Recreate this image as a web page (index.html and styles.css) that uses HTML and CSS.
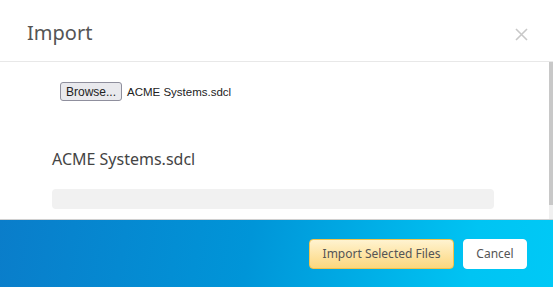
FILE: index.html
```html
<!DOCTYPE html>
<html lang="en">
  <head>
    <meta charset="UTF-8" />
    <meta name="viewport" content="width=device-width, initial-scale=1.0" />
    <title>Import</title>
    <link rel="stylesheet" href="styles.css">
  </head>
  <body>
    <div class="modal">
      <div class="header">
        <div class="title">Import</div>
        <div class="close">
          <svg width="13" height="13" viewBox="0 0 13 13">
            <path d="M1 1 L12 12 M12 1 L1 12" stroke="#c8c8c8" stroke-width="1.6" fill="none" />
          </svg>
        </div>
      </div>

      <div class="content">
        <div class="inner">
          <div class="file-row">
            <button class="browse">Browse...</button>
            <span class="file-name">ACME Systems.sdcl</span>
          </div>
          <div class="selected">ACME Systems.sdcl</div>
          <div class="progress"></div>
        </div>
        <div class="scrollbar">
          <div class="thumb"></div>
        </div>
      </div>

      <div class="footer">
        <button class="btn btn-import">Import Selected Files</button>
        <button class="btn btn-cancel">Cancel</button>
      </div>
    </div>
  </body>
</html>
```

FILE: styles.css
```css
body {
  margin: 0;
  padding: 0;
  background: #fff;
  font-family: "Noto Sans", "Open Sans", sans-serif;
}

.modal {
  width: 553px;
  height: 287px;
  display: flex;
  flex-direction: column;
}

.header {
  flex: none;
  height: 62px;
  border-bottom: 1px solid #e8e8e8;
  display: flex;
  justify-content: space-between;
  align-items: center;
  padding: 0 25px 0 27px;
  box-sizing: border-box;
}
.title {
  font-size: 20px;
  color: #555;
  margin-top: 4px;
}
.close {
  width: 13px;
  height: 13px;
  margin-top: 7px;
}
.close > svg {
  display: block;
}

.content {
  flex: none;
  height: 158px;
  box-sizing: border-box;
  border-bottom: 1px solid #d0d0d0;
  display: flex;
  overflow: hidden;
}
.inner {
  flex: 1;
  padding: 20px 0 0 52px;
}
.scrollbar {
  width: 4px;
  background: #f0f0f0;
}
.scrollbar > .thumb {
  height: 143px;
  background: #c8c8c8;
}

.file-row {
  display: flex;
  align-items: center;
  margin-left: 8px;
  height: 19px;
}
.browse {
  box-sizing: border-box;
  height: 19px;
  padding: 0 5px;
  border: 1px solid #8f8f9d;
  border-radius: 3px;
  background: #e9e9ed;
  font-family: "Liberation Sans", sans-serif;
  font-size: 12px;
  color: #222;
}
.file-name {
  margin-left: 5px;
  font-family: "Liberation Sans", sans-serif;
  font-size: 11.5px;
  color: #222;
}

.selected {
  margin-top: 47px;
  font-size: 16px;
  color: #444;
}
.progress {
  margin-top: 19px;
  width: 442px;
  height: 20px;
  border-radius: 4px;
  background: #f1f1f1;
}

.footer {
  flex: 1;
  background: linear-gradient(100deg, #0a7dca 0%, #0095d8 45%, #00c4f3 85%, #00c9f6 100%);
  display: flex;
  justify-content: flex-end;
  align-items: center;
  gap: 9px;
  padding: 0 26px 0 0;
}
.btn {
  box-sizing: border-box;
  height: 30px;
  border-radius: 4px;
  font-family: "Noto Sans", "Open Sans", sans-serif;
  font-size: 12px;
  color: #555;
  cursor: pointer;
}
.btn-import {
  width: 145px;
  border: 1px solid #f2c34a;
  background: linear-gradient(#fff3d0, #fcd77e);
}
.btn-cancel {
  width: 64px;
  border: 1px solid #fff;
  background: #fff;
}
```
